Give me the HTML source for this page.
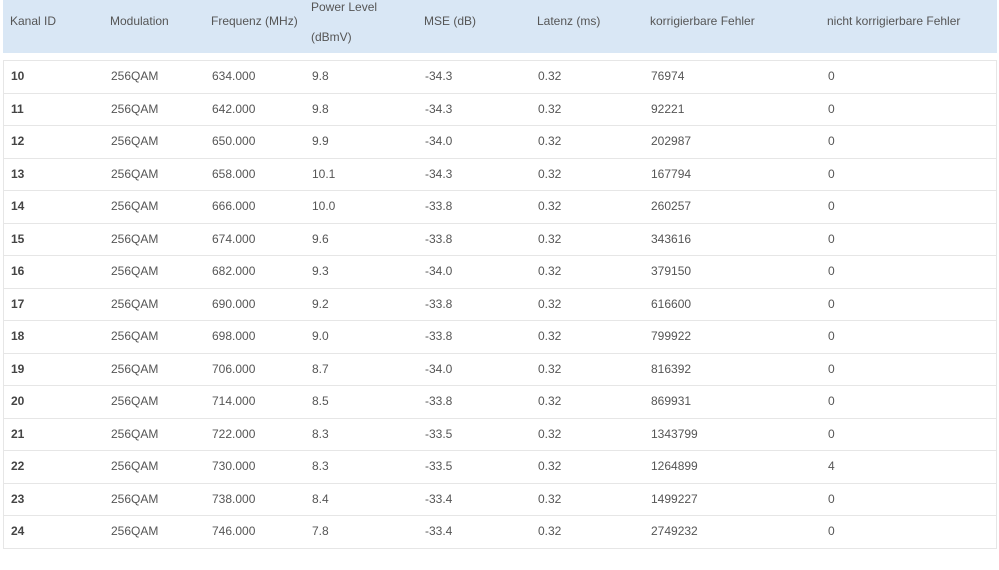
<!DOCTYPE html>
<html><head><style>
body{margin:0;background:#fff;font-family:"Liberation Sans",sans-serif;font-size:12px;color:#555;}
.wrap{position:absolute;left:3px;top:0;width:994px;}
.head{position:relative;height:53px;background:#d9e7f5;}
.head div{position:absolute;top:14px;line-height:15px;}
.row{position:relative;height:31.5px;border:1px solid #e6e6e6;border-top:none;}
.row:first-of-type{border-top:1px solid #e6e6e6}
.row div{position:absolute;top:8px;line-height:15px;}
.row div:first-child{font-weight:bold;color:#444;}
.c1{left:7px}.c2{left:107px}.c3{left:208px}.c4{left:308px}.c5{left:421px}.c6{left:534px}.c7{left:647px}.c8{left:824px}
</style></head><body>
<div class="wrap">
<div class="head">
<div class="c1">Kanal ID</div><div class="c2">Modulation</div><div class="c3">Frequenz (MHz)</div>
<div class="c4" style="top:-8px;line-height:30px">Power Level<br>(dBmV)</div>
<div class="c5">MSE (dB)</div><div class="c6">Latenz (ms)</div><div class="c7">korrigierbare Fehler</div><div class="c8">nicht korrigierbare Fehler</div>
</div>
</div>
<div style="position:absolute;left:3px;top:60px;width:994px">
<div class="row"><div class="c1">10</div><div class="c2">256QAM</div><div class="c3">634.000</div><div class="c4">9.8</div><div class="c5">-34.3</div><div class="c6">0.32</div><div class="c7">76974</div><div class="c8">0</div></div>
<div class="row"><div class="c1">11</div><div class="c2">256QAM</div><div class="c3">642.000</div><div class="c4">9.8</div><div class="c5">-34.3</div><div class="c6">0.32</div><div class="c7">92221</div><div class="c8">0</div></div>
<div class="row"><div class="c1">12</div><div class="c2">256QAM</div><div class="c3">650.000</div><div class="c4">9.9</div><div class="c5">-34.0</div><div class="c6">0.32</div><div class="c7">202987</div><div class="c8">0</div></div>
<div class="row"><div class="c1">13</div><div class="c2">256QAM</div><div class="c3">658.000</div><div class="c4">10.1</div><div class="c5">-34.3</div><div class="c6">0.32</div><div class="c7">167794</div><div class="c8">0</div></div>
<div class="row"><div class="c1">14</div><div class="c2">256QAM</div><div class="c3">666.000</div><div class="c4">10.0</div><div class="c5">-33.8</div><div class="c6">0.32</div><div class="c7">260257</div><div class="c8">0</div></div>
<div class="row"><div class="c1">15</div><div class="c2">256QAM</div><div class="c3">674.000</div><div class="c4">9.6</div><div class="c5">-33.8</div><div class="c6">0.32</div><div class="c7">343616</div><div class="c8">0</div></div>
<div class="row"><div class="c1">16</div><div class="c2">256QAM</div><div class="c3">682.000</div><div class="c4">9.3</div><div class="c5">-34.0</div><div class="c6">0.32</div><div class="c7">379150</div><div class="c8">0</div></div>
<div class="row"><div class="c1">17</div><div class="c2">256QAM</div><div class="c3">690.000</div><div class="c4">9.2</div><div class="c5">-33.8</div><div class="c6">0.32</div><div class="c7">616600</div><div class="c8">0</div></div>
<div class="row"><div class="c1">18</div><div class="c2">256QAM</div><div class="c3">698.000</div><div class="c4">9.0</div><div class="c5">-33.8</div><div class="c6">0.32</div><div class="c7">799922</div><div class="c8">0</div></div>
<div class="row"><div class="c1">19</div><div class="c2">256QAM</div><div class="c3">706.000</div><div class="c4">8.7</div><div class="c5">-34.0</div><div class="c6">0.32</div><div class="c7">816392</div><div class="c8">0</div></div>
<div class="row"><div class="c1">20</div><div class="c2">256QAM</div><div class="c3">714.000</div><div class="c4">8.5</div><div class="c5">-33.8</div><div class="c6">0.32</div><div class="c7">869931</div><div class="c8">0</div></div>
<div class="row"><div class="c1">21</div><div class="c2">256QAM</div><div class="c3">722.000</div><div class="c4">8.3</div><div class="c5">-33.5</div><div class="c6">0.32</div><div class="c7">1343799</div><div class="c8">0</div></div>
<div class="row"><div class="c1">22</div><div class="c2">256QAM</div><div class="c3">730.000</div><div class="c4">8.3</div><div class="c5">-33.5</div><div class="c6">0.32</div><div class="c7">1264899</div><div class="c8">4</div></div>
<div class="row"><div class="c1">23</div><div class="c2">256QAM</div><div class="c3">738.000</div><div class="c4">8.4</div><div class="c5">-33.4</div><div class="c6">0.32</div><div class="c7">1499227</div><div class="c8">0</div></div>
<div class="row"><div class="c1">24</div><div class="c2">256QAM</div><div class="c3">746.000</div><div class="c4">7.8</div><div class="c5">-33.4</div><div class="c6">0.32</div><div class="c7">2749232</div><div class="c8">0</div></div>
</div>
</body></html>
